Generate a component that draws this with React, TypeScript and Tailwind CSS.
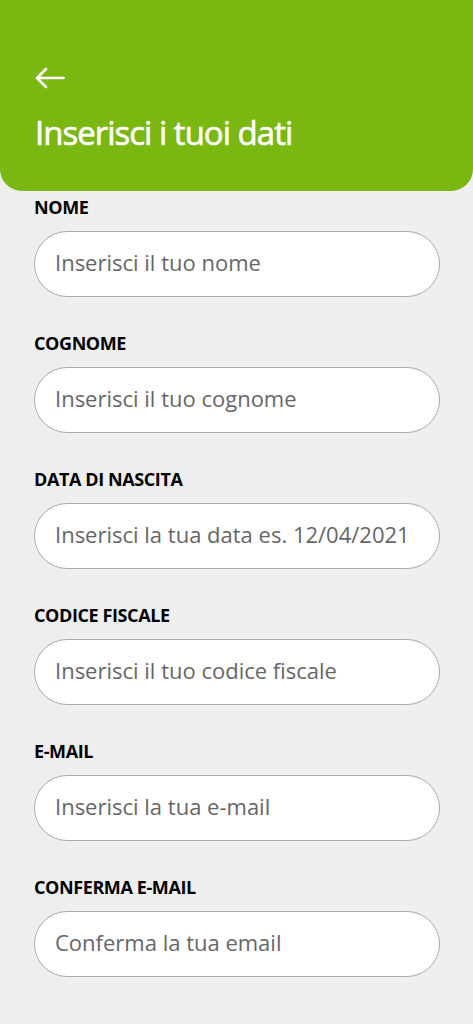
const fields = [
  { label: "NOME", placeholder: "Inserisci il tuo nome" },
  { label: "COGNOME", placeholder: "Inserisci il tuo cognome" },
  { label: "DATA DI NASCITA", placeholder: "Inserisci la tua data es. 12/04/2021" },
  { label: "CODICE FISCALE", placeholder: "Inserisci il tuo codice fiscale" },
  { label: "E-MAIL", placeholder: "Inserisci la tua e-mail" },
  { label: "CONFERMA E-MAIL", placeholder: "Conferma la tua email" },
];

function Field({ label, placeholder }: { label: string; placeholder: string }) {
  return (
    <div className="flex flex-col">
      <label className="text-[18px] font-bold leading-6 tracking-[-0.4px] text-black">{label}</label>
      <input
        type="text"
        placeholder={placeholder}
        className="mt-3 h-[66px] w-full rounded-full border-[1.5px] border-[#a9a9a9] bg-white px-5 pb-1 text-[22px] text-[#333] outline-none placeholder:text-[#666]"
      />
    </div>
  );
}

export default function App() {
  return (
    <div className="min-h-[1024px] bg-[#efefef] font-['Open_Sans','Noto_Sans',sans-serif]">
      <header className="h-[191px] rounded-b-[22px] bg-[#7ab710] px-[35px] pt-[67px]">
        <svg width="30" height="22" viewBox="0 0 30 22" fill="none" stroke="white" strokeWidth="2.6" strokeLinecap="round" strokeLinejoin="round">
          <path d="M28.5 11H2M11 2 2 11l9 9" />
        </svg>
        <h1 className="mt-[24px] text-[33px] leading-10 tracking-[-1px] text-white [-webkit-text-stroke:0.6px_white]">
          Inserisci i tuoi dati
        </h1>
      </header>
      <main className="flex flex-col gap-[34px] px-[34px] pt-1 pr-[33px]">
        {fields.map((f) => (
          <Field key={f.label} {...f} />
        ))}
      </main>
    </div>
  );
}
